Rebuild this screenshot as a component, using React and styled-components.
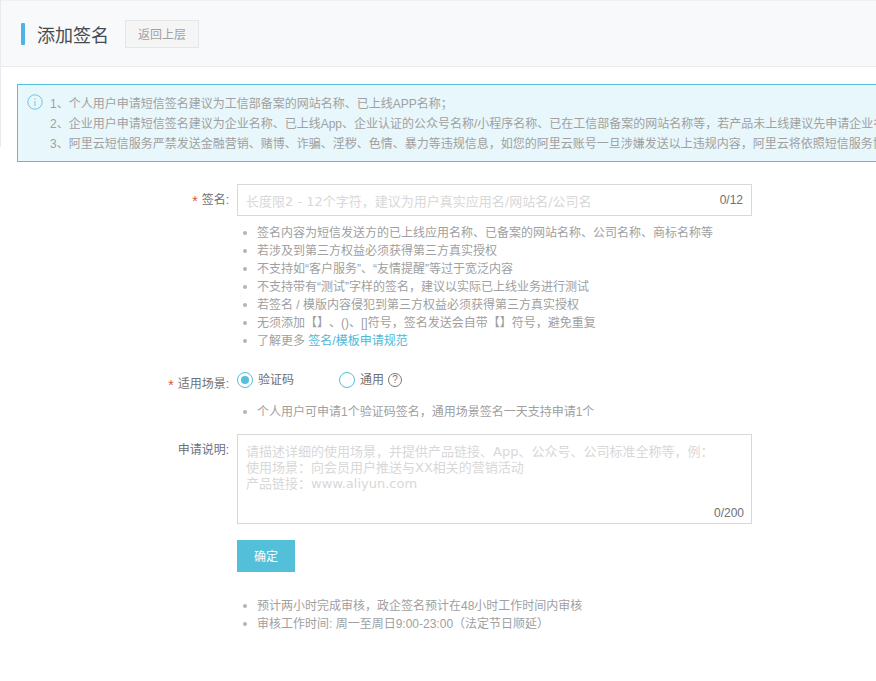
import React from 'react';
import styled, { createGlobalStyle } from 'styled-components';

const GlobalStyle = createGlobalStyle`
  html, body {
    margin: 0;
    padding: 0;
    background: #fff;
    overflow: hidden;
  }
  body {
    font-family: "Liberation Sans", "Noto Sans CJK SC", sans-serif;
    font-size: 12px;
    color: #a0a0a0;
    text-spacing-trim: space-all;
  }
`;

const Page = styled.div`
  position: relative;
  width: 876px;
  height: 681px;
  overflow: hidden;

  /* thin line left of the header, runs on behind the notice */
  &::before {
    content: '';
    position: absolute;
    left: 0;
    top: 0;
    width: 1px;
    height: 147px;
    background: #e8eaee;
  }
`;

const Header = styled.div`
  height: 67px;
  box-sizing: border-box;
  display: flex;
  align-items: center;
  padding-left: 21px;
  background: #f8f9fb;
  border-top: 1px solid #f0f1f3;
  border-bottom: 1px solid #e8eaee;
`;

const TitleBar = styled.span`
  width: 4px;
  height: 22px;
  border-radius: 1px;
  background: #4fb3e8;
  margin-right: 12px;
`;

const Title = styled.h1`
  margin: 0 16px 0 0;
  font-size: 18px;
  font-weight: 400;
  color: #454b50;
`;

const BackButton = styled.button`
  width: 74px;
  height: 28px;
  padding: 0;
  font: inherit;
  color: #a0a0a0;
  background: #f5f5f5;
  border: 1px solid #e6e6e6;
`;

const Alert = styled.div`
  display: flex;
  width: 900px;
  height: 78px;
  box-sizing: border-box;
  margin: 17px 0 22px 17px;
  padding: 9px 0 0 9px;
  background: #e8f7fb;
  border: 1px solid #54c0da;
`;

const AlertIcon = styled.svg`
  flex: none;
  width: 16px;
  height: 16px;
  margin-right: 7px;
`;

const AlertText = styled.div`
  white-space: nowrap;
  line-height: 20px;
`;

const Form = styled.div`
  display: flex;
  flex-direction: column;
`;

const Row = styled.div`
  display: flex;
  margin-bottom: ${(p) => p.$gap || 0}px;
`;

const Label = styled.label`
  flex: none;
  width: 229px;
  box-sizing: border-box;
  padding-top: ${(p) => p.$top || 0}px;
  text-align: right;
  line-height: 18px;
  color: #707070;
`;

const Star = styled.span`
  font-size: 14px;
  line-height: 1;
  vertical-align: -2px;
  color: #e0552f;
  margin-right: 4px;
`;

const Field = styled.div`
  margin-left: 8px;
  width: 515px;
`;

const InputBox = styled.div`
  height: 32px;
  box-sizing: border-box;
  display: flex;
  align-items: center;
  justify-content: space-between;
  padding: 0 8px;
  border: 1px solid #d7d8d9;
`;

const Placeholder = styled.span`
  font-family: "DejaVu Sans", "Noto Sans CJK SC", sans-serif;
  font-size: 13px;
  color: #d8d8d8;
`;

const Counter = styled.span`
  color: #707070;
`;

const Tips = styled.ul`
  margin: ${(p) => p.$top || 0}px 0 0;
  padding: 0 0 0 20px;
  list-style: none;
  line-height: 18px;
  white-space: nowrap;
`;

const Tip = styled.li`
  position: relative;
  &::before {
    content: '';
    position: absolute;
    left: -14px;
    top: 7px;
    width: 4px;
    height: 4px;
    border-radius: 50%;
    background: #b4b4b4;
  }
`;

const Link = styled.a`
  color: #4fb8d6;
`;

const RadioRow = styled.div`
  display: flex;
  align-items: center;
  height: 18px;
`;

const Radio = styled.span`
  flex: none;
  width: 16px;
  height: 16px;
  box-sizing: border-box;
  border: 1px solid #54c0da;
  border-radius: 50%;
  margin-right: 5px;
  display: flex;
  align-items: center;
  justify-content: center;
  &::after {
    content: '';
    display: ${(p) => (p.$checked ? 'block' : 'none')};
    width: 8px;
    height: 8px;
    border-radius: 50%;
    background: #54c0da;
  }
`;

const RadioLabel = styled.span`
  padding-bottom: 3px;
  color: #707070;
  margin-right: ${(p) => p.$gap || 0}px;
`;

const HelpIcon = styled.span`
  width: 14px;
  height: 14px;
  box-sizing: border-box;
  margin: 0 0 1px 4px;
  border: 1px solid #777;
  border-radius: 50%;
  display: flex;
  align-items: center;
  justify-content: center;
  font-size: 10px;
  color: #777;
`;

const TextBox = styled.div`
  height: 90px;
  box-sizing: border-box;
  position: relative;
  padding: 9px 8px 8px;
  border: 1px solid #d7d8d9;
  font-family: "DejaVu Sans", "Noto Sans CJK SC", sans-serif;
  font-size: 13px;
  line-height: 16px;
  color: #d8d8d8;
  white-space: nowrap;
`;

const TextCounter = styled(Counter)`
  position: absolute;
  right: 7px;
  bottom: 2px;
  font-family: "Liberation Sans", sans-serif;
  font-size: 12px;
`;

const Submit = styled.button`
  display: block;
  width: 58px;
  height: 32px;
  margin-top: 16px;
  padding: 0 0 2px;
  font: inherit;
  color: #fff;
  background: #54bfd9;
  border: 0;
`;

function App() {
  return (
    <Page>
      <GlobalStyle />
      <Header>
        <TitleBar />
        <Title>添加签名</Title>
        <BackButton>返回上层</BackButton>
      </Header>
      <Alert>
        <AlertIcon viewBox="0 0 16 16" fill="none" stroke="#6cc7e0">
          <circle cx="8" cy="8" r="7.2" />
          <path d="M8 4.2v1.3M8 7v5" />
        </AlertIcon>
        <AlertText>
          <div>1、个人用户申请短信签名建议为工信部备案的网站名称、已上线APP名称；</div>
          <div>2、企业用户申请短信签名建议为企业名称、已上线App、企业认证的公众号名称/小程序名称、已在工信部备案的网站名称等，若产品未上线建议先申请企业名称</div>
          <div>3、阿里云短信服务严禁发送金融营销、赌博、诈骗、淫秽、色情、暴力等违规信息，如您的阿里云账号一旦涉嫌发送以上违规内容，阿里云将依照短信服务协议</div>
        </AlertText>
      </Alert>
      <Form>
        <Row $gap={21}>
          <Label $top={7}>
            <Star>*</Star>签名:
          </Label>
          <Field>
            <InputBox>
              <Placeholder>长度限2 - 12个字符，建议为用户真实应用名/网站名/公司名</Placeholder>
              <Counter>0/12</Counter>
            </InputBox>
            <Tips $top={8}>
              <Tip>签名内容为短信发送方的已上线应用名称、已备案的网站名称、公司名称、商标名称等</Tip>
              <Tip>若涉及到第三方权益必须获得第三方真实授权</Tip>
              <Tip>不支持如“客户服务”、“友情提醒”等过于宽泛内容</Tip>
              <Tip>不支持带有“测试”字样的签名，建议以实际已上线业务进行测试</Tip>
              <Tip>若签名 / 模版内容侵犯到第三方权益必须获得第三方真实授权</Tip>
              <Tip>无须添加【】、()、[]符号，签名发送会自带【】符号，避免重复</Tip>
              <Tip>
                了解更多 <Link>签名/模板申请规范</Link>
              </Tip>
            </Tips>
          </Field>
        </Row>
        <Row $gap={13}>
          <Label $top={4}>
            <Star>*</Star>适用场景:
          </Label>
          <Field>
            <RadioRow>
              <Radio $checked />
              <RadioLabel $gap={45}>验证码</RadioLabel>
              <Radio />
              <RadioLabel>通用</RadioLabel>
              <HelpIcon>?</HelpIcon>
            </RadioRow>
            <Tips $top={14}>
              <Tip>个人用户可申请1个验证码签名，通用场景签名一天支持申请1个</Tip>
            </Tips>
          </Field>
        </Row>
        <Row>
          <Label $top={7}>申请说明:</Label>
          <Field>
            <TextBox>
              <div>请描述详细的使用场景，并提供产品链接、App、公众号、公司标准全称等，例：</div>
              <div>使用场景：向会员用户推送与XX相关的营销活动</div>
              <div>产品链接：www.aliyun.com</div>
              <TextCounter>0/200</TextCounter>
            </TextBox>
            <Submit>确定</Submit>
            <Tips $top={25}>
              <Tip>预计两小时完成审核，政企签名预计在48小时工作时间内审核</Tip>
              <Tip>审核工作时间: 周一至周日9:00-23:00（法定节日顺延）</Tip>
            </Tips>
          </Field>
        </Row>
      </Form>
    </Page>
  );
}

export default App;
